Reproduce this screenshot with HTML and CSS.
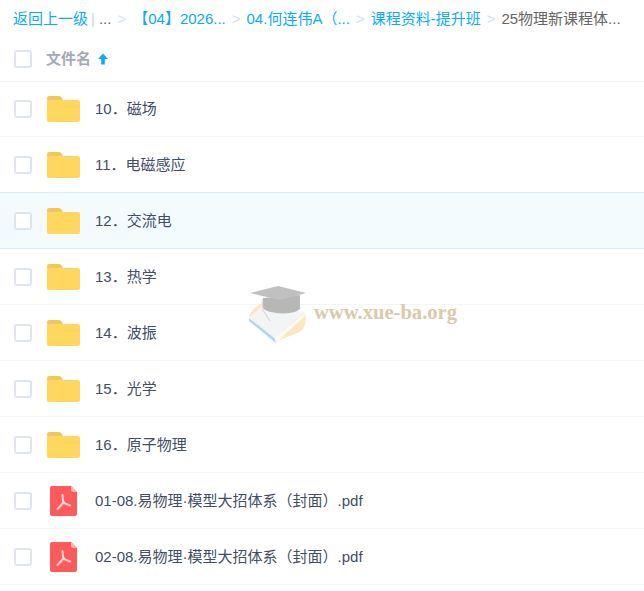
FILE: index.html
```html
<!DOCTYPE html>
<html lang="zh-CN">
<head>
    <meta charset="UTF-8">
    <meta name="viewport" content="width=device-width, initial-scale=1.0">
    <title>文件列表</title>
    <link rel="stylesheet" href="styles.css">
</head>
<body>
    <svg class="icon-defs" width="0" height="0">
        <symbol id="folder" viewBox="0 0 33 26">
            <path d="M0 2.500a2.500 2.500 0 0 1 2.500-2.500h9.500a3 3 0 0 1 2.500 1.500l1.500 3H0z" fill="#f0c75a"/>
            <path d="M0 5.500a1.500 1.500 0 0 1 1.500-1.500H31a2 2 0 0 1 2 2V24a2 2 0 0 1-2 2H2a2 2 0 0 1-2-2z" fill="#ffd65e"/>
        </symbol>
        <symbol id="pdf" viewBox="0 0 27 30">
            <path d="M2 0h19l6 6v22a2 2 0 0 1-2 2H2a2 2 0 0 1-2-2V2a2 2 0 0 1 2-2z" fill="#fd5a5c"/>
            <path d="M21 0l6 6h-4a2 2 0 0 1-2-2z" fill="#ffb3b3"/>
            <path d="M12.500 9c.5 2.500 0 5 1 7s4 2.500 6.500 3.500M13.500 16c-1 2-3 4-6 7" fill="none" stroke="#ffd4d4" stroke-width="2.100" stroke-linecap="round"/>
        </symbol>
    </svg>

    <div class="breadcrumb">
        <a class="crumb-link">返回上一级</a>
        <span class="crumb-bar">|</span>
        <span class="crumb-dots">...</span>
        <span class="crumb-sep">&gt;</span>
        <a class="crumb-link crumb-bracket">【04】2026...</a>
        <span class="crumb-sep">&gt;</span>
        <a class="crumb-link">04.何连伟A（...</a>
        <span class="crumb-sep">&gt;</span>
        <a class="crumb-link">课程资料-提升班</a>
        <span class="crumb-sep">&gt;</span>
        <span class="crumb-current">25物理新课程体...</span>
    </div>

    <div class="list-head">
        <span class="checkbox"></span>
        <span class="head-name">文件名</span>
        <svg class="sort-arrow" width="12" height="12" viewBox="0 0 12 12">
            <path d="M6 .5l5 5.500H7.800V11.500H4.200V6H1z" fill="#09aaff"/>
        </svg>
    </div>

    <ul class="file-list">
        <li class="file-row">
            <span class="checkbox"></span>
            <svg class="file-icon"><use href="#folder"/></svg>
            <span class="file-name">10．磁场</span>
        </li>
        <li class="file-row">
            <span class="checkbox"></span>
            <svg class="file-icon"><use href="#folder"/></svg>
            <span class="file-name">11．电磁感应</span>
        </li>
        <li class="file-row active">
            <span class="checkbox"></span>
            <svg class="file-icon"><use href="#folder"/></svg>
            <span class="file-name">12．交流电</span>
        </li>
        <li class="file-row">
            <span class="checkbox"></span>
            <svg class="file-icon"><use href="#folder"/></svg>
            <span class="file-name">13．热学</span>
        </li>
        <li class="file-row">
            <span class="checkbox"></span>
            <svg class="file-icon"><use href="#folder"/></svg>
            <span class="file-name">14．波振</span>
        </li>
        <li class="file-row">
            <span class="checkbox"></span>
            <svg class="file-icon"><use href="#folder"/></svg>
            <span class="file-name">15．光学</span>
        </li>
        <li class="file-row">
            <span class="checkbox"></span>
            <svg class="file-icon"><use href="#folder"/></svg>
            <span class="file-name">16．原子物理</span>
        </li>
        <li class="file-row">
            <span class="checkbox"></span>
            <svg class="file-icon pdf-icon"><use href="#pdf"/></svg>
            <span class="file-name">01-08.易物理·模型大招体系（封面）.pdf</span>
        </li>
        <li class="file-row">
            <span class="checkbox"></span>
            <svg class="file-icon pdf-icon"><use href="#pdf"/></svg>
            <span class="file-name">02-08.易物理·模型大招体系（封面）.pdf</span>
        </li>
    </ul>

    <!-- Watermark sits over the list -->
    <div class="watermark">
        <svg class="wm-logo" width="66" height="66" viewBox="0 0 66 66">
            <path d="M4 36C8 28 14 24 20 22L60 34C62 42 60 50 52 53L30 62z" fill="#fce6bd"/>
            <path d="M5 37L20 24 60 32 29 58z" fill="#f2f4f5"/>
            <path d="M29 58L61 32 62 34 31 63z" fill="#f9f9f6"/>
            <path d="M4 38L29 58 31 63 4 41z" fill="#a9d5ef"/>
            <path d="M18 18V28C22 34 48 36 55 29V15z" fill="#b4b4b4"/>
            <path d="M5 13L33 6 61 13 35 20z" fill="#bdbdbd"/>
            <path d="M17 19L18 30 25 41" fill="none" stroke="#dbd8ca" stroke-width="1.200"/>
        </svg>
        <span class="wm-text">www.xue-ba.org</span>
    </div>
</body>
</html>
```

FILE: styles.css
```css
* {
    box-sizing: border-box;
}

body {
    margin: 0;
    height: 591px;
    overflow: hidden;
    position: relative;
    background-color: #fff;
    color: #424e67;
    font-family: "Liberation Sans", "Noto Sans CJK SC", sans-serif;
    font-size: 15px;
    line-height: 20px;
}

.icon-defs {
    position: absolute;
}

.breadcrumb {
    display: flex;
    align-items: center;
    height: 38px;
    padding-left: 13px;
    white-space: nowrap;
}

.crumb-link {
    color: #09aaff;
}

.crumb-bracket {
    margin-left: 1px;
}

.crumb-bar {
    margin-left: 3px;
    color: #c7d6ea;
}

.crumb-dots {
    margin-left: 4px;
    color: #666;
}

.crumb-sep {
    margin: 0 6px;
    color: #d3e0f0;
}

.crumb-current {
    color: #666;
}

.checkbox {
    flex: none;
    width: 18px;
    height: 18px;
    border: 2px solid #dfe5ee;
    border-radius: 3px;
    background-color: #fff;
}

.list-head {
    display: flex;
    align-items: center;
    height: 44px;
    padding: 0 0 2px 14px;
    border-bottom: 1px solid #f2f5f9;
}

.head-name {
    margin-left: 14px;
    color: #a4a9b9;
    font-weight: bold;
}

.sort-arrow {
    margin-left: 6px;
}

.file-list {
    list-style: none;
    margin: 0;
    padding: 0;
}

.file-row {
    display: flex;
    align-items: center;
    height: 56px;
    padding-left: 14px;
    border-bottom: 1px solid #f2f5f9;
}

.file-row:first-child {
    height: 55px;
}

.file-row.active {
    background-color: #f4fbff;
    border-bottom-color: #d9ecf7;
    box-shadow: 0 -1px 0 #d9ecf7;
}

.file-icon {
    flex: none;
    width: 33px;
    height: 26px;
    margin-left: 15px;
}

.pdf-icon {
    height: 30px;
}

.file-name {
    margin-left: 15px;
}

.watermark {
    position: absolute;
    left: 245px;
    top: 280px;
    display: flex;
    align-items: center;
    opacity: 0.95;
}

.wm-text {
    margin: -2px 0 0 3px;
    color: #d8c8a4;
    font-family: "Liberation Serif", serif;
    font-size: 20.600px;
    font-weight: bold;
}
```
